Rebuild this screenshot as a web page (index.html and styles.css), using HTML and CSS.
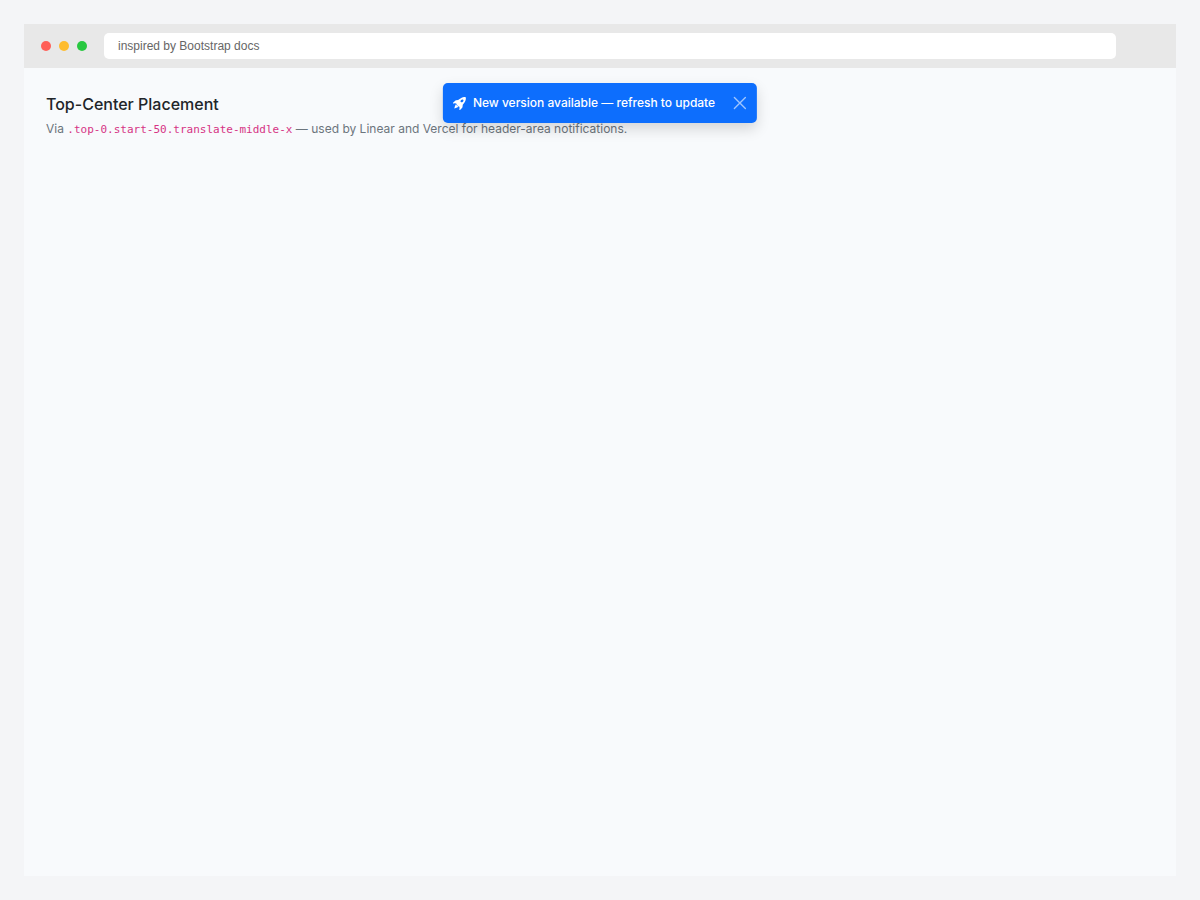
FILE: index.html
```
<!DOCTYPE html>
<html lang="en">
<head>
    <meta charset="UTF-8">
    <meta name="viewport" content="width=device-width, initial-scale=1">
    <title>Top-Center Placement</title>
    <link rel="stylesheet" href="styles.css">
</head>
<body>
    <div class="browser">
        <div class="toolbar">
            <div class="dots">
                <span class="dot red"></span>
                <span class="dot yellow"></span>
                <span class="dot green"></span>
            </div>
            <input class="address" type="text" value="inspired by Bootstrap docs" aria-label="Address">
        </div>
        <main class="page">
            <h1>Top-Center Placement</h1>
            <p>Via <code>.top-0.start-50.translate-middle-x</code> — used by Linear and Vercel for header-area notifications.</p>
            <div class="toast" role="status">
                <svg class="rocket" viewBox="0 0 16 16" fill="currentColor" aria-hidden="true">
                    <path d="M12.17 9.53c2.307-2.592 3.278-4.684 3.641-6.218.21-.887.214-1.58.16-2.065a3.6 3.6 0 0 0-.108-.563 2 2 0 0 0-.078-.23V.453c-.073-.164-.168-.234-.352-.295a2 2 0 0 0-.16-.045 4 4 0 0 0-.57-.093c-.49-.044-1.19-.03-2.08.188-1.536.374-3.618 1.343-6.161 3.604l-2.4.238h-.006a2.55 2.55 0 0 0-1.524.734L.15 7.17a.512.512 0 0 0 .433.868l1.896-.271c.28-.04.592.013.955.132.232.076.437.16.655.248l.203.083c.196.816.66 1.58 1.275 2.195.613.614 1.376 1.08 2.191 1.277l.082.202c.089.218.173.424.249.657.118.363.172.676.132.956l-.271 1.9a.512.512 0 0 0 .867.433l2.382-2.386c.41-.41.668-.949.732-1.526zm.11-3.699c-.797.8-1.93.961-2.528.362-.598-.6-.436-1.733.361-2.532.798-.799 1.93-.96 2.528-.361s.437 1.732-.36 2.531Z"/>
                    <path d="M5.205 10.787a7.6 7.6 0 0 0 1.804 1.352c-1.118 1.007-4.929 2.028-5.054 1.903-.126-.127.737-4.189 1.839-5.18.346.69.837 1.35 1.411 1.925"/>
                </svg>
                <span>New version available — refresh to update</span>
                <button class="close" type="button" aria-label="Close">
                    <svg viewBox="0 0 14 14" fill="none" stroke="currentColor" stroke-width="1.4" stroke-linecap="round" aria-hidden="true">
                        <path d="M1.5 1.5l11 11M12.5 1.5l-11 11"/>
                    </svg>
                </button>
            </div>
        </main>
    </div>
</body>
</html>
```

FILE: styles.css
```
* {
    box-sizing: border-box;
}
body {
    margin: 0;
    padding: 24px;
    min-height: 100vh;
    display: flex;
    background: #f4f5f7;
    font-family: Inter, sans-serif;
    color: #212529;
}
.browser {
    flex: 1;
    display: flex;
    flex-direction: column;
}
.toolbar {
    display: flex;
    align-items: center;
    gap: 17px;
    padding: 9px 60px 9px 17px;
    background: #e8e8e8;
}
.dots {
    display: flex;
    gap: 8px;
}
.dot {
    width: 10px;
    height: 10px;
    border-radius: 50%;
}
.red {
    background: #ff5f57;
}
.yellow {
    background: #febc2e;
}
.green {
    background: #28c840;
}
.address {
    flex: 1;
    min-width: 0;
    height: 26px;
    padding: 0 14px;
    border: none;
    border-radius: 5px;
    background: white;
    color: #666;
    font-family: "Liberation Sans", Arial, sans-serif;
    font-size: 12px;
}
.page {
    flex: 1;
    position: relative;
    padding: 24px 22px;
    background: #f8fafc;
}
h1 {
    margin: 0 0 4px;
    font-size: 16px;
    font-weight: 500;
    line-height: 24px;
}
p {
    margin: 0;
    color: #6c757d;
    font-size: 12px;
    line-height: 18px;
}
code {
    color: #d63384;
    font-family: "DejaVu Sans Mono", monospace;
    font-size: 11px;
}
/* sits over the page, centred at the top */
.toast {
    position: absolute;
    top: 15px;
    left: 50%;
    transform: translateX(-50%);
    display: flex;
    align-items: center;
    padding: 10px;
    border-radius: 5px;
    background: #0d6efd;
    box-shadow: 0 6px 14px rgba(0, 0, 0, 0.15);
    color: white;
    font-size: 12px;
    font-weight: 500;
    line-height: 20px;
    white-space: nowrap;
}
.rocket {
    width: 13px;
    height: 13px;
    margin-right: 7px;
}
.close {
    display: flex;
    margin-left: 18px;
    padding: 0;
    border: none;
    background: none;
    color: white;
    opacity: 0.6;
    cursor: pointer;
}
.close:hover {
    opacity: 1;
}
.close svg {
    width: 14px;
    height: 14px;
}
```
